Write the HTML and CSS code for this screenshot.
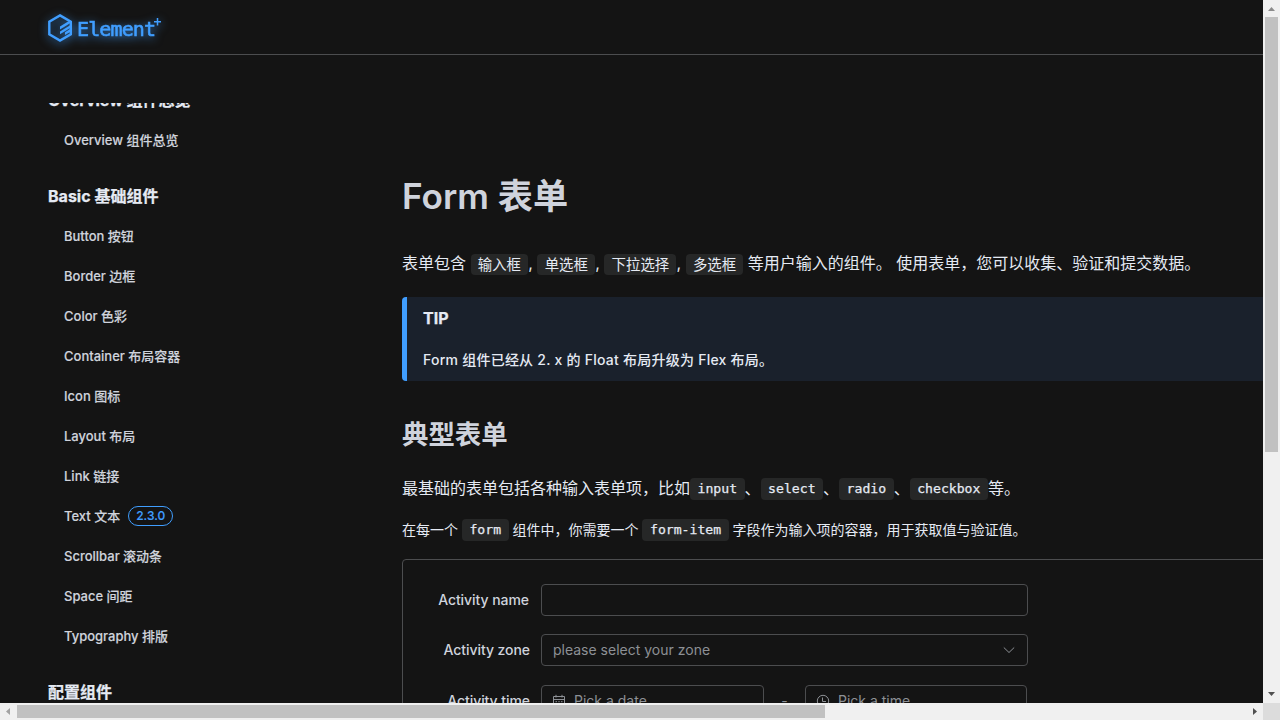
FILE: index.html
```html
<!DOCTYPE html>
<html lang="zh-CN">
<head>
<meta charset="utf-8">
<title>Form 表单 | Element Plus</title>
<link rel="stylesheet" href="styles.css">
</head>
<body>
<div class="window">
  <div class="viewport">
    <header class="header">
      <svg class="logo" width="130" height="40" viewBox="0 0 130 40">
        <path class="logo-line" d="M12 8.400 22.800 14.600V27.400L12 33.600 1.300 27.400V14.600Z"/>
        <path class="logo-fill" d="M12 19.500 20.500 14.200 22.500 15.300V16L12 22.500ZM12 24.500 23 17.700V20.500L12 27.300ZM17 25.300 23 21.500V24.500L17 28Z"/>
        <text class="logo-text" x="29" y="28.500" textLength="79" lengthAdjust="spacing">Element</text>
        <path class="logo-plus" d="M109.500 11V18.500M106 14.700H113"/>
      </svg>
    </header>
    <div class="page">
      <aside class="sidebar">
        <nav class="nav">
          <h2 class="group-title">Overview 组件总览</h2>
          <a class="link">Overview 组件总览</a>
          <h2 class="group-title group-next">Basic 基础组件</h2>
          <a class="link">Button 按钮</a>
          <a class="link">Border 边框</a>
          <a class="link">Color 色彩</a>
          <a class="link">Container 布局容器</a>
          <a class="link">Icon 图标</a>
          <a class="link">Layout 布局</a>
          <a class="link">Link 链接</a>
          <a class="link">Text 文本<span class="tag">2.3.0</span></a>
          <a class="link">Scrollbar 滚动条</a>
          <a class="link">Space 间距</a>
          <a class="link">Typography 排版</a>
          <h2 class="group-title group-next">配置组件</h2>
        </nav>
      </aside>
      <main class="content">
        <h1 class="title">Form 表单</h1>
        <p class="intro">表单包含 <code class="code-zh">输入框</code>, <code class="code-zh">单选框</code>, <code class="code-zh">下拉选择</code>, <code class="code-zh">多选框</code> 等用户输入的组件。 使用表单，您可以收集、验证和提交数据。</p>
        <section class="tip">
          <p class="tip-title">TIP</p>
          <p class="tip-text">Form 组件已经从 2. x 的 Float 布局升级为 Flex 布局。</p>
        </section>
        <h2 class="subtitle">典型表单</h2>
        <p class="desc">最基础的表单包括各种输入表单项，比如<code>input</code>、<code>select</code>、<code>radio</code>、<code>checkbox</code>等。</p>
        <p class="note">在每一个 <code>form</code> 组件中，你需要一个 <code>form-item</code> 字段作为输入项的容器，用于获取值与验证值。</p>
        <form class="example">
          <div class="row"><label class="label label-name">Activity name</label><div class="field"></div></div>
          <div class="row row-zone"><label class="label">Activity zone</label>
            <div class="field"><span>please select your zone</span>
              <svg class="arrow" width="14" height="14" viewBox="0 0 14 14"><path d="M1.800 4.500 7 9.500 12.200 4.500"/></svg>
            </div>
          </div>
          <div class="row"><label class="label">Activity time</label>
            <div class="field date"><svg class="icon" width="14" height="14" viewBox="0 0 14 14"><path d="M1.500 2.500H12.500V12.500H1.500ZM1.500 5.500H12.500M4 .8V3.500M10 .8V3.500M3.500 7.700H5M6.300 7.700H7.700M9 7.700H10.500M3.500 10H5M6.300 10H7.700M9 10H10.500"/></svg><span>Pick a date</span></div>
            <span class="dash">-</span>
            <div class="field time"><svg class="icon" width="14" height="14" viewBox="0 0 14 14"><circle cx="7" cy="7" r="5.700"/><path d="M6.500 3.500V7.500H10"/></svg><span>Pick a time</span></div>
          </div>
        </form>
      </main>
    </div>
  </div>
  <div class="bar-v">
    <svg width="17" height="17" viewBox="0 0 17 17"><path fill="#8b8b8b" d="M5 11 8.500 7 12 11Z"/></svg>
    <div class="thumb-v"></div>
    <svg class="end" width="17" height="17" viewBox="0 0 17 17"><path fill="#505050" d="M5 6H12L8.500 10Z"/></svg>
  </div>
  <div class="bar-h">
    <svg width="17" height="17" viewBox="0 0 17 17"><path fill="#a3a3a3" d="M10 5V12L6 8.500Z"/></svg>
    <div class="thumb-h"></div>
    <svg class="end" width="17" height="17" viewBox="0 0 17 17"><path fill="#505050" d="M7 5V12L11 8.500Z"/></svg>
  </div>
  <div class="corner"></div>
</div>
</body>
</html>
```
FILE: styles.css
```css
* { box-sizing: border-box; }
body {
  margin: 0;
  overflow: hidden;
  background: #141414;
  color: #e5eaf3;
  font-family: Inter, "Noto Sans CJK SC", sans-serif;
}
h1, h2, p { margin: 0; white-space: nowrap; }
.window {
  display: grid;
  grid-template: 703px 17px / 1263px 17px;
  width: 1280px;
  height: 720px;
}
.viewport { overflow: hidden; min-width: 0; }
.header {
  height: 55px;
  padding: 7px 48px 0;
  border-bottom: 1px solid #4c4d4f;
}
.logo {
  display: block;
  overflow: visible;
  filter: drop-shadow(0 2px 5px rgba(64, 158, 255, .75));
}
.logo-line { fill: none; stroke: #409eff; stroke-width: 2.4; }
.logo-fill { fill: #409eff; }
.logo-text { fill: #409eff; font: 20px "DejaVu Sans Mono", monospace; stroke: #409eff; stroke-width: .6; }
.logo-plus { fill: none; stroke: #409eff; stroke-width: 1.5; }

.page { display: flex; height: 648px; }
.sidebar { width: 402px; height: 600px; margin-top: 48px; overflow: hidden; flex: none; }
.nav { display: flex; flex-direction: column; margin-top: -15px; padding-left: 48px; }
.group-title { height: 24px; font-size: 16px; line-height: 24px; font-weight: 700; -webkit-text-stroke: .25px; }
.group-next { margin-top: 24px; }
.group-title + .link { margin-top: 8px; }
.link {
  display: flex;
  align-items: center;
  height: 40px;
  padding: 0 0 2px 16px;
  font-size: 13px;
  font-weight: 500;
  color: #cfd3dc;
  white-space: nowrap;
  -webkit-text-stroke: .15px;
}
.tag {
  height: 20px;
  margin: 2px 0 0 8px;
  padding: 0 7px;
  border: 1px solid #409eff;
  border-radius: 10px;
  color: #409eff;
  font-size: 12px;
  line-height: 18px;
}

.content { width: 880px; flex: none; padding-top: 120px; }
.title { height: 43px; font-size: 35.2px; line-height: 43px; font-weight: 600; color: #cfd3dc; }
.intro { height: 28px; margin-top: 31px; font-size: 16px; line-height: 28px; }
code {
  display: inline-block;
  height: 22px;
  padding: 0 7.5px;
  border-radius: 4px;
  background: #262727;
  font: 500 13.15px/21px "DejaVu Sans Mono", monospace;
  -webkit-text-stroke: .25px;
  vertical-align: 1px;
}
.code-zh { height: 21px; font: 400 14.4px/20px "Noto Sans CJK SC", sans-serif; -webkit-text-stroke: 0; vertical-align: -1px; padding: 0 7.3px; }
.tip {
  height: 84px;
  margin-top: 20px;
  padding: 8px 16px;
  border-left: 5px solid #409eff;
  border-radius: 4px;
  background: #1a212c;
}
.tip-title { height: 26px; font-size: 16px; line-height: 26px; font-weight: 700; -webkit-text-stroke: .25px; }
.tip-text { height: 24px; margin-top: 17px; font-size: 14px; line-height: 24px; font-weight: 500; letter-spacing: .24px; }
.subtitle { height: 34px; margin-top: 36px; font-size: 26.4px; line-height: 34px; font-weight: 700; color: #cfd3dc; }
.desc { height: 28px; margin-top: 23px; font-size: 16px; line-height: 28px; }
.note { height: 24px; margin-top: 16px; font-size: 14px; line-height: 24px; }
.example {
  height: 400px;
  margin-top: 17px;
  padding: 24px 0 0 24px;
  border: 1px solid #4c4d4f;
  border-radius: 4px;
  font-size: 14px;
}
.row { display: flex; height: 32px; margin-bottom: 18px; }
.row-zone { margin-bottom: 19px; }
.label {
  width: 114px;
  padding-right: 11px;
  color: #cfd3dc;
  font-weight: 500;
  letter-spacing: -.06px;
  line-height: 32px;
  text-align: right;
  white-space: nowrap;
}
.label-name { padding-right: 12px; }
.field {
  display: flex;
  align-items: center;
  width: 487px;
  height: 32px;
  padding: 0 11px;
  border: 1px solid #4c4d4f;
  border-radius: 4px;
  color: #8d9095;
}
.field span { padding-bottom: 2px; }
.arrow, .icon { fill: none; stroke: #8d9095; stroke-width: 1; }
.arrow { margin-left: auto; }
.icon { margin: 0 8px 0 -1px; }
.date { width: 223px; }
.time { width: 222px; }
.dash { width: 41px; color: #8d9095; line-height: 32px; text-align: center; }

.bar-v { display: flex; flex-direction: column; background: #f0f0f0; }
.bar-h { display: flex; background: #f0f0f0; }
.bar-v svg, .bar-h svg { display: block; flex: none; }
.thumb-v { width: 13px; height: 435px; margin-left: 2px; background: #c1c1c1; }
.thumb-h { width: 808px; height: 13px; margin-top: 2px; background: #c1c1c1; }
.bar-v .end { margin-top: auto; }
.bar-h .end { margin-left: auto; }
.corner { background: #dcdcdc; }
```
